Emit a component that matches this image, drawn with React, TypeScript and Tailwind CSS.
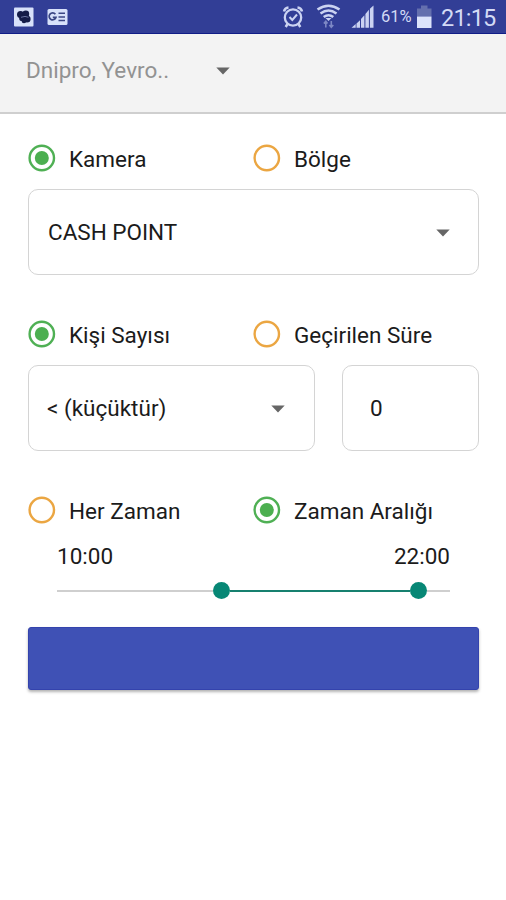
import type { ReactNode } from "react";

function Arrow() {
  return (
    <svg width="14" height="8" viewBox="0 0 14 8" className="shrink-0">
      <path d="M0.3 0.5H13.7L7 7.5Z" fill="#666" />
    </svg>
  );
}

function Radio({ label, checked = false }: { label: string; checked?: boolean }) {
  return (
    <label className="flex h-7 w-[225px] items-center">
      <svg width="28" height="28" viewBox="0 0 28 28" className="shrink-0">
        <circle cx="13.8" cy="14" r="12.2" fill="none" stroke={checked ? "#4fb054" : "#eba642"} strokeWidth="2.4" />
        {checked && <circle cx="13.8" cy="14" r="7" fill="#4caf50" />}
      </svg>
      <span className="ml-[13px] whitespace-nowrap pt-px leading-7">{label}</span>
    </label>
  );
}

function Box({ children, className }: { children: ReactNode; className: string }) {
  return (
    <div className={`flex h-[86px] items-center rounded-[10px] border-[1.5px] border-[#d4d4d4] pt-[2px] ${className}`}>
      {children}
    </div>
  );
}

function StatusBar() {
  return (
    <div className="flex h-[34px] items-center border-b border-[#101d87] bg-[#323e96] text-[#d3daf5]">
      <svg width="80" height="33" viewBox="0 0 80 33">
        <rect x="14" y="7.5" width="19.5" height="19" rx="1" fill="#d8e1fa" />
        <g fill="#151c49">
          <circle cx="20.5" cy="14.5" r="3.5" />
          <circle cx="25.8" cy="14" r="3.4" />
          <circle cx="22.3" cy="18" r="3.2" />
          <circle cx="27" cy="19" r="3.6" />
          <circle cx="24" cy="21" r="2.3" />
        </g>
        <path d="M21 17.3L25 16.4L28.5 17.3" stroke="#8d98c7" strokeWidth=".7" fill="none" />
        <rect x="47.5" y="9" width="20" height="16" rx="1.5" fill="#d8e1fa" />
        <path d="M55.4 14.2A3.5 3.5 0 1 0 56 17.3H52.8" fill="none" stroke="#3b4684" strokeWidth="1.7" />
        <path d="M58.5 13.2H65M58.5 16.9H65M58.5 20.4H65" stroke="#3b4684" strokeWidth="1.5" />
      </svg>
      <svg width="98" height="33" viewBox="280 0 98 33" className="ml-[200px] shrink-0" fill="none" stroke="#cbd3f2">
        <circle cx="293" cy="17.5" r="8.2" strokeWidth="2.3" />
        <path d="M289.5 17L292.3 20L297 14.5" strokeWidth="2" />
        <path d="M284 11.5A5 5 0 0 1 288.5 7.5M297.5 7.5A5 5 0 0 1 302 11.5M287.5 24L285.7 27M298.5 24L300.3 27" strokeWidth="2.5" />
        <path d="M317.5 9.5Q328.5 1.8 339.5 9.5M320.5 13.4Q328.5 7.5 336.5 13.4M323.7 17Q328.5 13.4 333.3 17" strokeWidth="2.5" />
        <path d="M325.5 18H331.5L328.5 21Z" fill="#cbd3f2" stroke="none" />
        <path d="M325.8 27.5V21.5M323.8 23.5L325.8 21.3L327.5 23.5M331.3 21V27M329.4 25L331.3 27.3L333.3 25" stroke="#7d88c5" strokeWidth="1.6" />
        <g fill="#cbd3f2" stroke="none">
          <path d="M351.5 27.8L355.7 24.1V27.8ZM356.5 23.4L360 20.3V27.8H356.5ZM361 19L364.4 15.3V27.8H361ZM365.4 13.9L368.9 9.8V27.8H365.4ZM369.9 8.7L373.5 5.5V27.8H369.9Z" />
        </g>
      </svg>
      <span className="ml-[3px] mt-px w-[34px] whitespace-nowrap text-[16.5px] leading-8">61%</span>
      <svg width="16" height="33" viewBox="416 0 16 33" className="ml-[1px] shrink-0">
        <path d="M417 8.5H421V5.5H427.5V8.5H431.5V16.5H417Z" fill="#646fae" />
        <path d="M417 16.5H431.5V28H417Z" fill="#dce3fb" />
      </svg>
      <span className="ml-[9px] mt-[3px] whitespace-nowrap text-[23.5px] leading-8 tracking-[-0.8px]">21:15</span>
    </div>
  );
}

export default function App() {
  return (
    <div className="flex h-[900px] w-[506px] flex-col overflow-hidden bg-white font-['Roboto',sans-serif] text-[22.5px] text-[#1b1b1b]">
      <StatusBar />
      <header className="flex h-20 items-center border-b-2 border-[#cfcfcf] bg-[#f3f3f3] pb-[5px] pl-[26px] text-[#929292]">
        <span className="w-[190px] whitespace-nowrap pt-px">Dnipro, Yevro..</span>
        <Arrow />
      </header>
      <main className="flex flex-col pl-7 pr-[27px] pt-[30px]">
        <section className="h-44">
          <div className="flex">
            <Radio label="Kamera" checked />
            <Radio label="Bölge" />
          </div>
          <Box className="mt-[17px] w-[451px] justify-between pl-[19px] pr-[28px]">
            <span>CASH POINT</span>
            <Arrow />
          </Box>
        </section>
        <section className="h-44">
          <div className="flex">
            <Radio label="Kişi Sayısı" checked />
            <Radio label="Geçirilen Süre" />
          </div>
          <div className="mt-[17px] flex justify-between">
            <Box className="w-[287px] justify-between pl-[18px] pr-[29px]">
              <span>&lt; (küçüktür)</span>
              <Arrow />
            </Box>
            <Box className="w-[137px] pl-[27px]">0</Box>
          </div>
        </section>
        <section>
          <div className="flex">
            <Radio label="Her Zaman" />
            <Radio label="Zaman Aralığı" checked />
          </div>
          <div className="mx-[29px] mt-[16px] flex justify-between leading-8">
            <span>10:00</span>
            <span>22:00</span>
          </div>
          <div className="ml-[29px] mt-[9px] flex h-[18px] w-[393px] items-center">
            <div className="mt-[2px] h-[2.5px] w-[155.5px] bg-[#cfcfcf]" />
            <div className="size-[17px] shrink-0 rounded-full bg-[#078775]" />
            <div className="mt-[2px] h-[2.5px] w-[180px] bg-[#16806f]" />
            <div className="size-[17px] shrink-0 rounded-full bg-[#078775]" />
            <div className="mt-[2px] h-[2.5px] grow bg-[#cfcfcf]" />
          </div>
          <button aria-label="Ara" className="mt-[28px] block h-[63px] w-[451px] rounded-[3px] border border-[#3443ad] bg-[#3f51b5] shadow-[0_2px_3px_rgba(0,0,0,0.3)]" />
        </section>
      </main>
    </div>
  );
}
